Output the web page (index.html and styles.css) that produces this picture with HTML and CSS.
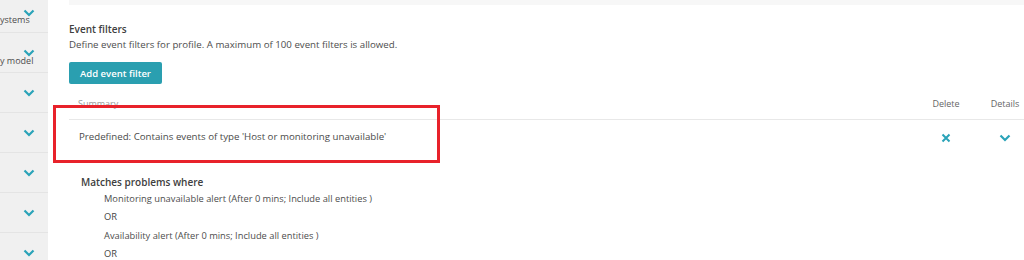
FILE: index.html
```html
<!DOCTYPE html>
<html>
<head>
<meta charset="utf-8">
<link rel="stylesheet" href="styles.css">
</head>
<body>
<div class="page">
  <nav class="sidebar">
    <div class="side-row first">
      <span class="side-label">ystems</span>
      <svg class="chev side-chev" viewBox="0 0 12 8"><path d="M1.5 1.5 L6 6 L10.5 1.5"/></svg>
    </div>
    <div class="side-row second">
      <span class="side-label">y model</span>
      <svg class="chev side-chev" viewBox="0 0 12 8"><path d="M1.5 1.5 L6 6 L10.5 1.5"/></svg>
    </div>
    <div class="side-row"><svg class="chev" viewBox="0 0 12 8"><path d="M1.5 1.5 L6 6 L10.5 1.5"/></svg></div>
    <div class="side-row"><svg class="chev" viewBox="0 0 12 8"><path d="M1.5 1.5 L6 6 L10.5 1.5"/></svg></div>
    <div class="side-row"><svg class="chev" viewBox="0 0 12 8"><path d="M1.5 1.5 L6 6 L10.5 1.5"/></svg></div>
    <div class="side-row"><svg class="chev" viewBox="0 0 12 8"><path d="M1.5 1.5 L6 6 L10.5 1.5"/></svg></div>
    <div class="side-row"><svg class="chev" viewBox="0 0 12 8"><path d="M1.5 1.5 L6 6 L10.5 1.5"/></svg></div>
  </nav>
  <main class="main">
    <div class="top-bar"></div>
    <section class="filters">
      <h3 class="title">Event filters</h3>
      <p class="desc">Define event filters for profile. A maximum of 100 event filters is allowed.</p>
      <button class="btn">Add event filter</button>
      <div class="table">
        <div class="thead">
          <div class="th th-summary">Summary</div>
          <div class="th th-center">Delete</div>
          <div class="th th-center">Details</div>
        </div>
        <div class="trow">
          <div class="td td-text">Predefined: Contains events of type 'Host or monitoring unavailable'</div>
          <div class="td-center">
            <svg class="xicon" viewBox="0 0 10 10"><path d="M1.5 1.5 L8.5 8.5 M8.5 1.5 L1.5 8.5"/></svg>
          </div>
          <div class="td-center">
            <svg class="chev" viewBox="0 0 12 8"><path d="M1.5 1.5 L6 6 L10.5 1.5"/></svg>
          </div>
        </div>
        <div class="highlight"></div>
      </div>
      <div class="details">
        <h4 class="details-title">Matches problems where</h4>
        <ul class="conds">
          <li>Monitoring unavailable alert (After 0 mins; Include all entities )</li>
          <li class="op">OR</li>
          <li>Availability alert (After 0 mins; Include all entities )</li>
          <li class="op">OR</li>
        </ul>
      </div>
    </section>
  </main>
</div>
</body>
</html>
```

FILE: styles.css
```css
* { box-sizing: border-box; }
html, body { margin: 0; padding: 0; background: #fff; }
body {
  font-family: "Open Sans", "Liberation Sans", sans-serif;
  color: #4d4d4d;
  font-size: 9.7px;
  overflow: hidden;
  height: 260px;
}
.page { display: flex; height: 260px; }

.sidebar {
  width: 48px;
  flex: 0 0 48px;
  background: #f0f0f0;
  overflow: hidden;
  display: flex;
  flex-direction: column;
}
.side-row {
  height: 40px;
  flex: 0 0 40px;
  border-bottom: 1px solid #e4e4e4;
  display: flex;
  align-items: center;
  padding-left: 23px;
  position: relative;
}
.side-row.first { height: 33px; flex-basis: 33px; }
.side-row.first, .side-row.second {
  align-items: flex-start;
  padding-left: 0;
}
.side-label {
  display: block;
  width: 28px;
  text-align: right;
  white-space: nowrap;
  font-size: 9px;
  color: #4d4d4d;
  line-height: 12px;
}
.side-row.first .side-label { margin-top: 14px; }
.side-row.second .side-label { margin-top: 22px; width: 31px; }
.side-row.first .side-chev { position: absolute; left: 23px; top: 9px; }
.side-row.second .side-chev { position: absolute; left: 23px; top: 16px; }

.chev {
  width: 12px;
  height: 8px;
  fill: none;
  stroke: #2aa3b8;
  stroke-width: 2.2;
  display: block;
}

.main { flex: 1; padding-left: 21px; min-width: 0; }
.top-bar { height: 5px; background: #f7f7f7; }

.filters { padding-top: 17px; }
.title {
  margin: 0;
  font-size: 10px;
  font-weight: 600;
  color: #404040;
  line-height: 14px;
}
.desc {
  margin: 2px 0 0;
  font-size: 9.7px;
  line-height: 14px;
  color: #4d4d4d;
}
.btn {
  margin-top: 10px;
  display: block;
  height: 22px;
  width: 93px;
  border: none;
  border-radius: 2px;
  background: #2a9fb0;
  color: #fff;
  font-family: inherit;
  font-size: 9.5px;
  font-weight: 600;
  padding: 0;
}

.table { position: relative; margin-top: 12px; }
.thead, .trow {
  display: grid;
  grid-template-columns: 1fr 80px 38px;
  align-items: center;
}
.thead {
  height: 24px;
  padding-bottom: 8px;
  border-bottom: 1px solid #e8e8e8;
}
.th { font-size: 9px; color: #666; }
.th-summary { padding-left: 9px; color: #999; }
.th-center, .td-center { display: flex; justify-content: center; }
.trow { height: 36px; }
.td-text { padding-left: 10px; padding-bottom: 4px; font-size: 9.7px; color: #4a4a4a; }
.xicon {
  width: 10px; height: 10px;
  fill: none; stroke: #2aa3b8; stroke-width: 2;
  display: block;
}
.highlight {
  position: absolute;
  left: -16px;
  top: 9px;
  width: 387px;
  height: 58px;
  border: 3px solid #e8222a;
  pointer-events: none;
}

.details { padding-left: 12px; margin-top: 19px; }
.details-title {
  margin: 0;
  font-size: 10px;
  font-weight: 600;
  color: #404040;
  line-height: 14px;
}
.conds {
  list-style: none;
  margin: 1px 0 0;
  padding-left: 23px;
}
.conds li {
  font-size: 9.3px;
  line-height: 18.3px;
  color: #4d4d4d;
}
.conds li.op { font-weight: 500; color: #454545; }
```
